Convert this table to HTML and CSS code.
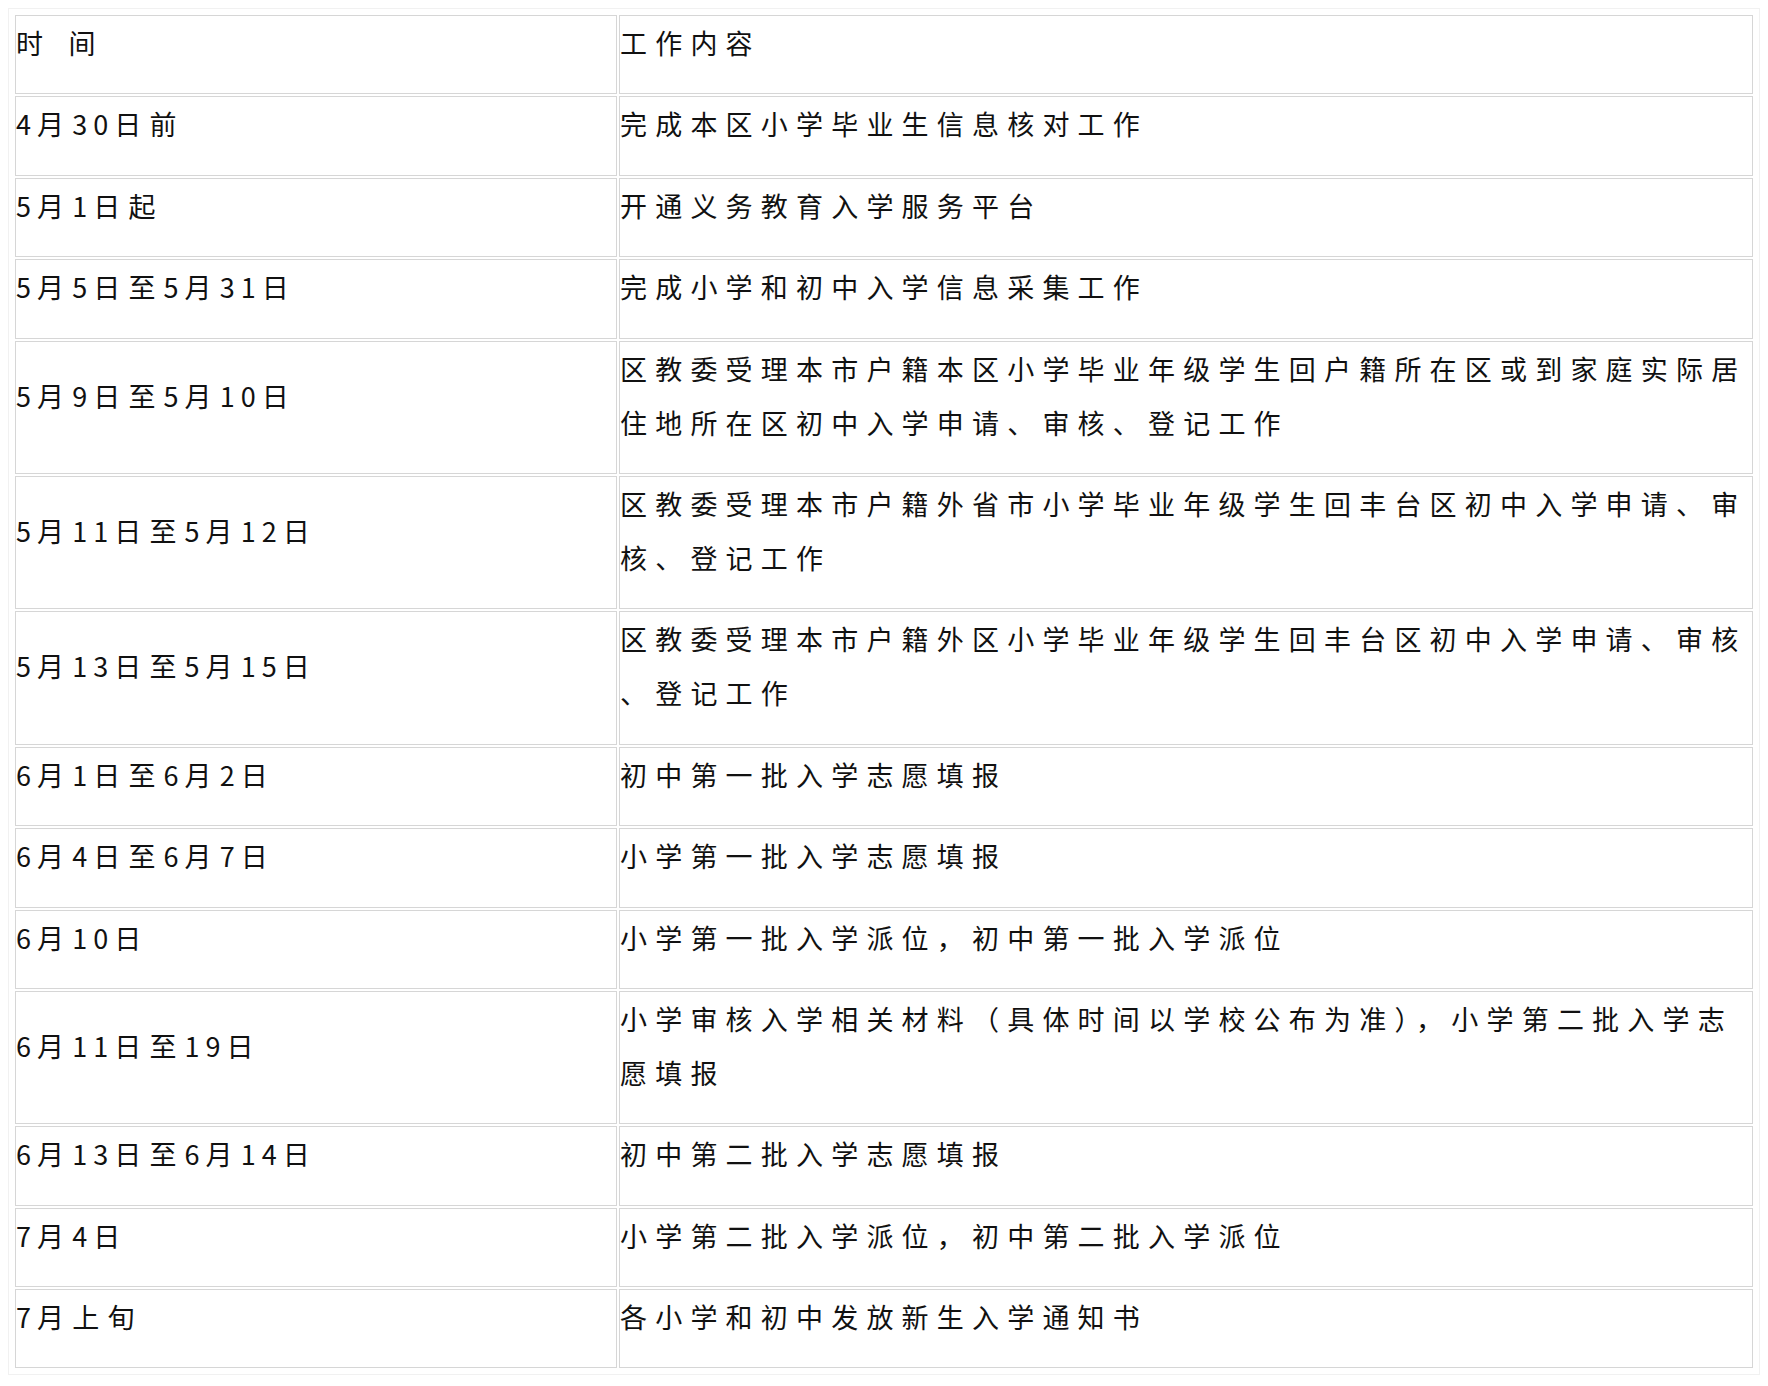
FILE: index.html
```html
<!DOCTYPE html>
<html lang="zh-CN">
<head>
<meta charset="utf-8">
<title>入学工作时间安排</title>
<link rel="stylesheet" href="styles.css">
</head>
<body>
<table class="schedule">
  <colgroup><col class="col-time"><col class="col-work"></colgroup>
  <tbody>
    <tr><td><p>时&#8196;间</p></td><td><p>工作内容</p></td></tr>
    <tr><td><p><span class="n">4</span>月<span class="n">30</span>日前</p></td><td><p>完成本区小学毕业生信息核对工作</p></td></tr>
    <tr><td><p><span class="n">5</span>月<span class="n">1</span>日起</p></td><td><p>开通义务教育入学服务平台</p></td></tr>
    <tr><td><p><span class="n">5</span>月<span class="n">5</span>日至<span class="n">5</span>月<span class="n">31</span>日</p></td><td><p>完成小学和初中入学信息采集工作</p></td></tr>
    <tr><td><p><span class="n">5</span>月<span class="n">9</span>日至<span class="n">5</span>月<span class="n">10</span>日</p></td><td><p>区教委受理本市户籍本区小学毕业年级学生回户籍所在区或到家庭实际居住地所在区初中入学申请、审核、登记工作</p></td></tr>
    <tr><td><p><span class="n">5</span>月<span class="n">11</span>日至<span class="n">5</span>月<span class="n">12</span>日</p></td><td><p>区教委受理本市户籍外省市小学毕业年级学生回丰台区初中入学申请、审核、登记工作</p></td></tr>
    <tr><td><p><span class="n">5</span>月<span class="n">13</span>日至<span class="n">5</span>月<span class="n">15</span>日</p></td><td><p>区教委受理本市户籍外区小学毕业年级学生回丰台区初中入学申请、审核、登记工作</p></td></tr>
    <tr><td><p><span class="n">6</span>月<span class="n">1</span>日至<span class="n">6</span>月<span class="n">2</span>日</p></td><td><p>初中第一批入学志愿填报</p></td></tr>
    <tr><td><p><span class="n">6</span>月<span class="n">4</span>日至<span class="n">6</span>月<span class="n">7</span>日</p></td><td><p>小学第一批入学志愿填报</p></td></tr>
    <tr><td><p><span class="n">6</span>月<span class="n">10</span>日</p></td><td><p>小学第一批入学派位，初中第一批入学派位</p></td></tr>
    <tr><td><p><span class="n">6</span>月<span class="n">11</span>日至<span class="n">19</span>日</p></td><td><p>小学审核入学相关材料（具体时间以学校公布为准），小学第二批入学志愿填报</p></td></tr>
    <tr><td><p><span class="n">6</span>月<span class="n">13</span>日至<span class="n">6</span>月<span class="n">14</span>日</p></td><td><p>初中第二批入学志愿填报</p></td></tr>
    <tr><td><p><span class="n">7</span>月<span class="n">4</span>日</p></td><td><p>小学第二批入学派位，初中第二批入学派位</p></td></tr>
    <tr><td><p><span class="n">7</span>月上旬</p></td><td><p>各小学和初中发放新生入学通知书</p></td></tr>
  </tbody>
</table>
</body>
</html>
```
FILE: styles.css
```css
html, body {
  background: #ffffff;
}
body {
  margin: 8px;
  font-family: "Noto Sans CJK SC", "Noto Sans", sans-serif;
  color: #111111;
}
.schedule {
  width: 100%;
  table-layout: fixed;
  border-collapse: separate;
  border-spacing: 2px;
  border: 1px solid #f1f1f1;
  padding: 4px;
  box-sizing: border-box;
}
.col-time {
  width: 602px;
}
.schedule td {
  border: 1px solid #d6d6d6;
  padding: 0;
  vertical-align: middle;
}
.schedule p {
  margin: 0 0 23.4px 0;
  font-size: 27px;
  font-weight: 400;
  line-height: 54px;
  letter-spacing: 8.2px;
  line-break: anywhere;
}
.schedule .n {
  letter-spacing: 6px;
}
```
